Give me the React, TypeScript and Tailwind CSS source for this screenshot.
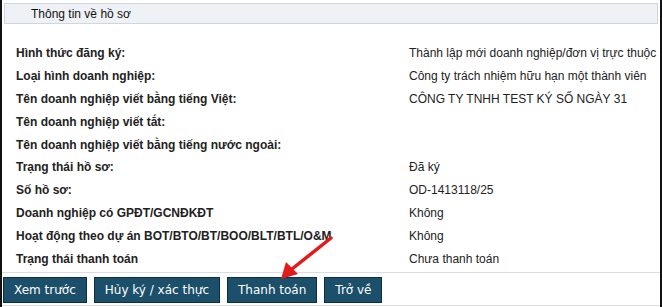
const rows: [string, string][] = [
  ["Hình thức đăng ký:", "Thành lập mới doanh nghiệp/đơn vị trực thuộc"],
  ["Loại hình doanh nghiệp:", "Công ty trách nhiệm hữu hạn một thành viên"],
  ["Tên doanh nghiệp viết bằng tiếng Việt:", "CÔNG TY TNHH TEST KÝ SỐ NGÀY 31"],
  ["Tên doanh nghiệp viết tắt:", ""],
  ["Tên doanh nghiệp viết bằng tiếng nước ngoài:", ""],
  ["Trạng thái hồ sơ:", "Đã ký"],
  ["Số hồ sơ:", "OD-1413118/25"],
  ["Doanh nghiệp có GPĐT/GCNĐKĐT", "Không"],
  ["Hoạt động theo dự án BOT/BTO/BT/BOO/BLT/BTL/O&M", "Không"],
  ["Trạng thái thanh toán", "Chưa thanh toán"],
];

const buttons = ["Xem trước", "Hủy ký / xác thực", "Thanh toán", "Trở về"];

export default function App() {
  return (
    <div className="relative h-[307px] w-[662px] overflow-hidden bg-white font-['Liberation_Sans',Arial,sans-serif] text-[#222]">
      <div className="flex h-full flex-col border-x-2 border-[#111] pt-[3px]">
        <div className="mx-[2px] flex h-[21px] items-center border border-[#cfd6de] bg-[#eef1f6] pl-[26px] text-[12px] text-[#111]">
          Thông tin về hồ sơ
        </div>
        <div className="mt-[18px] flex flex-col">
          {rows.map(([label, value]) => (
            <div key={label} className="flex h-[22.8px] items-center text-[12px]">
              <div className="w-[407px] whitespace-nowrap pl-[14px] font-bold">{label}</div>
              <div className="whitespace-nowrap">{value}</div>
            </div>
          ))}
        </div>
        <div className="mt-[2px] border-y border-[#d9dee4] pt-[4px] pb-[2px]">
          <div className="flex gap-[7px] pl-[1px]">
            {buttons.map((b) => (
              <button
                key={b}
                className="h-[26px] border border-[#0b3044] bg-[#1b4f6a] px-[10px] font-['DejaVu_Sans',Verdana,sans-serif] text-[12px] text-white"
              >
                {b}
              </button>
            ))}
          </div>
        </div>
      </div>
      <svg className="absolute left-0 top-0" width="662" height="307" viewBox="0 0 662 307">
        <line x1="331" y1="238" x2="292" y2="269" stroke="#e31b1b" strokeWidth="3.5" strokeLinecap="round" />
        <polygon points="281,279 286,262 298,274" fill="#e31b1b" />
      </svg>
    </div>
  );
}
